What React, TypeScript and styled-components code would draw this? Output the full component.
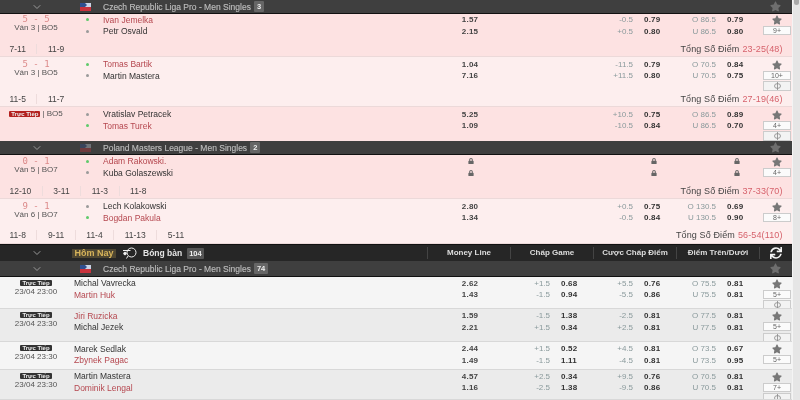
import React from 'react'
import styled, { createGlobalStyle } from 'styled-components'
import { FaStar, FaLock, FaSync } from 'react-icons/fa'
import { LuChevronDown } from 'react-icons/lu'

const GlobalStyle = createGlobalStyle`
  html, body { margin: 0; padding: 0; background: #e6e6e6; }
  body { width: 800px; height: 400px; overflow: hidden; font-family: "Liberation Sans", Arial, sans-serif; }
`

type Line = { hcp: string; val: string }
type Match = {
  tone: 'live' | 'liveAlt' | 'plain' | 'plainAlt'
  height: number
  top: number
  sets?: string[]
  subHeight?: number
  total?: [string, string]
  score?: string
  info?: string
  liveTag?: boolean
  dots?: [boolean, boolean]
  names: [string, string]
  fav: 0 | 1
  ml?: [string, string]
  game?: [Line, Line]
  point?: [Line, Line]
  ou?: [Line, Line]
  locked?: boolean
  more: string
  cash?: boolean
}

const l = (hcp: string, val: string): Line => ({ hcp, val })

const czech: Match[] = [
  { tone: 'live', height: 27, top: 0, subHeight: 16, sets: ['7-11', '11-9'], total: ['Tổng Số Điểm', '23-25(48)'], score: '5 - 5', info: 'Ván 3 | BO5', dots: [true, false], names: ['Ivan Jemelka', 'Petr Osvald'], fav: 0, ml: ['1.57', '2.15'], point: [l('-0.5', '0.79'), l('+0.5', '0.80')], ou: [l('O 86.5', '0.79'), l('U 86.5', '0.80')], more: '9+' },
  { tone: 'liveAlt', height: 34, top: 1.5, subHeight: 16, sets: ['11-5', '11-7'], total: ['Tổng Số Điểm', '27-19(46)'], score: '5 - 1', info: 'Ván 3 | BO5', dots: [true, false], names: ['Tomas Bartik', 'Martin Mastera'], fav: 0, ml: ['1.04', '7.16'], point: [l('-11.5', '0.79'), l('+11.5', '0.80')], ou: [l('O 70.5', '0.84'), l('U 70.5', '0.75')], more: '10+', cash: true },
  { tone: 'live', height: 34, top: 1.5, liveTag: true, info: '| BO5', dots: [false, true], names: ['Vratislav Petracek', 'Tomas Turek'], fav: 1, ml: ['5.25', '1.09'], point: [l('+10.5', '0.75'), l('-10.5', '0.84')], ou: [l('O 86.5', '0.89'), l('U 86.5', '0.70')], more: '4+', cash: true },
]

const poland: Match[] = [
  { tone: 'live', height: 28, top: 0.5, subHeight: 16, sets: ['12-10', '3-11', '11-3', '11-8'], total: ['Tổng Số Điểm', '37-33(70)'], score: '0 - 1', info: 'Ván 5 | BO7', dots: [true, false], names: ['Adam Rakowski.', 'Kuba Golaszewski'], fav: 0, locked: true, more: '4+' },
  { tone: 'liveAlt', height: 28, top: 1.5, subHeight: 17, sets: ['11-8', '9-11', '11-4', '11-13', '5-11'], total: ['Tổng Số Điểm', '56-54(110)'], score: '9 - 1', info: 'Ván 6 | BO7', dots: [false, true], names: ['Lech Kolakowski', 'Bogdan Pakula'], fav: 1, ml: ['2.80', '1.34'], point: [l('+0.5', '0.75'), l('-0.5', '0.84')], ou: [l('O 130.5', '0.69'), l('U 130.5', '0.90')], more: '8+' },
]

const today: Match[] = [
  { tone: 'plain', height: 32, top: 0.5, info: '23/04 23:00', names: ['Michal Vavrecka', 'Martin Huk'], fav: 1, ml: ['2.62', '1.43'], game: [l('+1.5', '0.68'), l('-1.5', '0.94')], point: [l('+5.5', '0.76'), l('-5.5', '0.86')], ou: [l('O 75.5', '0.81'), l('U 75.5', '0.81')], more: '5+', cash: true },
  { tone: 'plainAlt', height: 33, top: 1, info: '23/04 23:30', names: ['Jiri Ruzicka', 'Michal Jezek'], fav: 0, ml: ['1.59', '2.21'], game: [l('-1.5', '1.38'), l('+1.5', '0.34')], point: [l('-2.5', '0.81'), l('+2.5', '0.81')], ou: [l('O 77.5', '0.81'), l('U 77.5', '0.81')], more: '5+', cash: true },
  { tone: 'plain', height: 28, top: 1, info: '23/04 23:30', names: ['Marek Sedlak', 'Zbynek Pagac'], fav: 1, ml: ['2.44', '1.49'], game: [l('+1.5', '0.52'), l('-1.5', '1.11')], point: [l('+4.5', '0.81'), l('-4.5', '0.81')], ou: [l('O 73.5', '0.67'), l('U 73.5', '0.95')], more: '5+' },
  { tone: 'plainAlt', height: 30, top: 0.5, info: '23/04 23:30', names: ['Martin Mastera', 'Dominik Lengal'], fav: 1, ml: ['4.57', '1.16'], game: [l('+2.5', '0.34'), l('-2.5', '1.38')], point: [l('+9.5', '0.76'), l('-9.5', '0.86')], ou: [l('O 70.5', '0.81'), l('U 70.5', '0.81')], more: '7+', cash: true },
]

const toneBg = { live: '#fde2e2', liveAlt: '#fdeeee', plain: '#f5f5f5', plainAlt: '#ebebeb' }

const Shell = styled.div`
  width: 800px;
  height: 400px;
  display: flex;
  overflow: hidden;
  filter: blur(0.45px);
`
const Page = styled.div`
  width: 792px;
  height: 400px;
  overflow: hidden;
  color: #333;
  font-size: 8.5px;
`
const ScrollTrack = styled.div`
  width: 8px;
  background: #e6e6e6;
  border-left: 1px solid #f4f4f4;
  box-sizing: border-box;
`
const ScrollThumb = styled.div`
  height: 5px;
  margin: 0 1px;
  background: #a9a9a9;
  border-radius: 0 0 3px 3px;
`
const LeagueBar = styled.div<{ $h: number }>`
  height: ${p => p.$h}px;
  box-sizing: border-box;
  display: grid;
  grid-template-columns: 74px 23px 1fr 34px;
  align-items: center;
  background: #3f3f3f;
  border-bottom: 1px solid #111;
  color: #bdbdbd;
  font-size: 8.5px;
`
const Chevron = styled.div`
  display: flex;
  justify-content: center;
  color: #999;
  font-size: 12px;
`
const FlagBox = styled.div<{ $dim?: boolean }>`
  display: flex;
  justify-content: center;
  opacity: ${p => (p.$dim ? 0.35 : 1)};
`
const LeagueName = styled.div`
  display: flex;
  align-items: center;
  gap: 3px;
  padding-left: 6px;
  -webkit-text-stroke: 0.15px #bdbdbd;
`
const CountBadge = styled.span`
  background: #666;
  color: #eee;
  font-weight: bold;
  font-size: 7.5px;
  padding: 1px 3px;
  border-radius: 1px;
  -webkit-text-stroke: 0;
`
const TodayCount = styled(CountBadge)`
  padding: 1px 2px;
  background: #555;
`
const BarStar = styled.div`
  display: flex;
  justify-content: center;
  color: #6e6e6e;
  font-size: 11px;
`
const Row = styled.div<{ $h: number; $bg: string; $top: number }>`
  height: ${p => p.$h}px;
  box-sizing: border-box;
  padding-top: ${p => p.$top}px;
  display: grid;
  grid-template-columns: 74px 29px 324px 83px 83px 83px 83px 33px;
  background: ${p => p.$bg};
  overflow: hidden;
`
const TodayRow = styled(Row)`
  grid-template-columns: 74px 353px 83px 83px 83px 83px 33px;
  border-bottom: 1px solid #d8d8d8;
`
const Status = styled.div`
  display: flex;
  flex-direction: column;
  align-items: center;
  padding-right: 2px;
  color: #555;
  font-size: 8px;
  line-height: 7px;
`
const TodayStatus = styled(Status)`
  padding-top: 2px;
  line-height: 8px;
  gap: 2px;
`
const Score = styled.div`
  color: #dc8a8a;
  font-size: 9px;
  font-family: "DejaVu Sans Mono", monospace;
  line-height: 9px;
  padding-top: 1px;
  white-space: pre;
`
const LiveLine = styled.div`
  display: flex;
  align-items: center;
  gap: 2px;
  line-height: 9px;
  margin-top: 0.5px;
`
const LiveTag = styled.span<{ $dark?: boolean }>`
  background: ${p => (p.$dark ? '#333' : '#b3211f')};
  color: #eee;
  font-size: 6px;
  font-weight: bold;
  line-height: 6px;
  padding: 0 2px;
  border-radius: 1px;
`
const Lines = styled.div`
  display: flex;
  flex-direction: column;
`
const LineCell = styled.div`
  height: 11.5px;
  display: flex;
  align-items: center;
`
const Dot = styled.span<{ $on: boolean }>`
  width: 3px;
  height: 3px;
  margin-left: 11.5px;
  border-radius: 50%;
  background: ${p => (p.$on ? '#5fca6b' : '#9a9a9a')};
`
const Name = styled.span<{ $fav: boolean }>`
  font-size: 8.5px;
  color: ${p => (p.$fav ? '#b5474f' : '#333')};
`
const Odd = styled.span`
  width: 83px;
  box-sizing: border-box;
  padding-left: 3px;
  text-align: center;
  font-weight: bold;
  font-size: 8px;
  color: #444;
  letter-spacing: 0.2px;
`
const Hcp = styled.span`
  width: 40px;
  text-align: right;
  font-size: 8px;
  color: #8a9a9c;
`
const Price = styled.span`
  margin-left: 11px;
  font-weight: bold;
  font-size: 8px;
  color: #333;
  letter-spacing: 0.2px;
`
const LockBox = styled.span<{ $offset: number }>`
  width: 100%;
  padding-left: ${p => p.$offset}px;
  color: #666;
  font-size: 6px;
  display: flex;
`
const Extras = styled.div`
  display: flex;
  flex-direction: column;
  align-items: center;
  padding: 1px 0 0 3px;
  color: #777;
  font-size: 10px;
  line-height: 0;
`
const MoreBtn = styled.div`
  width: 26px;
  height: 7px;
  margin-top: 1px;
  background: #fbfbfb;
  border: 1px solid #ccc;
  color: #666;
  font-size: 7px;
  line-height: 7px;
  text-align: center;
`
const CashBtn = styled(MoreBtn)`
  height: 8px;
  line-height: 8px;
  margin-top: 1.5px;
  background: #f3f3f3;
`
const SubRow = styled.div<{ $h: number; $bg: string }>`
  height: ${p => p.$h}px;
  box-sizing: border-box;
  display: flex;
  align-items: center;
  justify-content: space-between;
  padding: 0 9.5px 0 9.5px;
  background: ${p => p.$bg};
  border-bottom: 1px solid #ecd9d9;
`
const Sets = styled.div`
  display: flex;
  font-size: 8.5px;
  color: #444;
`
const SetCell = styled.span`
  padding-right: 10.5px;
  margin-right: 10.5px;
  border-right: 1px solid #eedcdc;
  &:last-child { border-right: 0; }
`
const Total = styled.div`
  font-size: 9px;
  color: #444;
  letter-spacing: 0.12px;
`
const TotalValue = styled.span`
  margin-left: 3px;
  color: #d6626c;
`
const TodayBar = styled.div`
  height: 17px;
  box-sizing: border-box;
  display: grid;
  grid-template-columns: 74px 353px 83px 83px 83px 83px 33px;
  align-items: center;
  background: #262626;
  border-top: 1px solid #111;
  color: #ddd;
  font-weight: bold;
  font-size: 8px;
`
const TodayTitle = styled.div`
  display: flex;
  align-items: center;
`
const TodayTag = styled.span`
  width: 44px;
  height: 9px;
  margin-left: -2px;
  line-height: 9px;
  text-align: center;
  background: #4e4632;
  color: #d8b45a;
  font-size: 9px;
`
const PaddleBox = styled.span`
  margin: 0 6px;
  display: flex;
`
const Sport = styled.span`
  margin-right: 5px;
  font-size: 8.5px;
  color: #e5e5e5;
`
const HeadCell = styled.div`
  height: 12px;
  line-height: 12px;
  text-align: center;
  border-left: 1px solid #444;
  white-space: nowrap;
`
const RefreshCell = styled(HeadCell)`
  display: flex;
  justify-content: center;
  align-items: center;
  font-size: 12px;
  color: #f2f2f2;
`

const Flag = () => (
  <svg width="11" height="8" viewBox="0 0 11 8">
    <rect width="11" height="4" fill="#c9d3e6" />
    <path d="M0 0h5l2 2-2 2H0z" fill="#2f4f8f" />
    <rect y="4" width="11" height="4" fill="#c8323c" />
  </svg>
)

const Paddle = () => (
  <svg width="15" height="12" viewBox="0 0 15 12" fill="none" stroke="#eee" strokeWidth="1">
    <circle cx="9.5" cy="5.5" r="4.5" />
    <path d="M1 3.5h7.5M6 9 4.5 11.5" />
    <circle cx="3" cy="6.5" r="1.3" fill="#eee" />
  </svg>
)

const CashIcon = () => (
  <svg width="7" height="8" viewBox="0 0 7 8" fill="none" stroke="#888" strokeWidth="0.8">
    <ellipse cx="3.5" cy="4" rx="3" ry="2.4" />
    <path d="M3.5 0v8" />
  </svg>
)

const League = ({ name, count, h, dim }: { name: string; count: number; h: number; dim?: boolean }) => (
  <LeagueBar $h={h}>
    <Chevron><LuChevronDown /></Chevron>
    <FlagBox $dim={dim}><Flag /></FlagBox>
    <LeagueName>{name}<CountBadge>{count}</CountBadge></LeagueName>
    <BarStar><FaStar /></BarStar>
  </LeagueBar>
)

const Quote = ({ lines }: { lines?: [Line, Line] }) => (
  <Lines>
    {lines?.map(x => (
      <LineCell key={x.hcp}>
        <Hcp>{x.hcp}</Hcp>
        <Price>{x.val}</Price>
      </LineCell>
    ))}
  </Lines>
)

const Locks = ({ offset }: { offset: number }) => (
  <Lines>
    <LineCell><LockBox $offset={offset}><FaLock /></LockBox></LineCell>
    <LineCell><LockBox $offset={offset}><FaLock /></LockBox></LineCell>
  </Lines>
)

const More = ({ m }: { m: Match }) => (
  <Extras>
    <FaStar />
    <MoreBtn>{m.more}</MoreBtn>
    {m.cash && <CashBtn><CashIcon /></CashBtn>}
  </Extras>
)

const LiveMatch = ({ m }: { m: Match }) => (
  <>
    <Row $h={m.height} $bg={toneBg[m.tone]} $top={m.top}>
      <Status>
        {m.liveTag ? (
          <LiveLine><LiveTag>Trực Tiếp</LiveTag>{m.info}</LiveLine>
        ) : (
          <>
            <Score>{m.score}</Score>
            {m.info}
          </>
        )}
      </Status>
      <Lines>
        <LineCell><Dot $on={!!m.dots?.[0]} /></LineCell>
        <LineCell><Dot $on={!!m.dots?.[1]} /></LineCell>
      </Lines>
      <Lines>
        {m.names.map((n, i) => (
          <LineCell key={n}><Name $fav={m.fav === i}>{n}</Name></LineCell>
        ))}
      </Lines>
      {m.locked ? <Locks offset={41} /> : (
        <Lines>
          {m.ml?.map(o => <LineCell key={o}><Odd>{o}</Odd></LineCell>)}
        </Lines>
      )}
      <div />
      {m.locked ? <Locks offset={58} /> : <Quote lines={m.point} />}
      {m.locked ? <Locks offset={58} /> : <Quote lines={m.ou} />}
      <More m={m} />
    </Row>
    {m.subHeight && (
      <SubRow $h={m.subHeight} $bg={toneBg[m.tone]}>
        <Sets>{m.sets?.map(s => <SetCell key={s}>{s}</SetCell>)}</Sets>
        <Total>{m.total?.[0]}<TotalValue>{m.total?.[1]}</TotalValue></Total>
      </SubRow>
    )}
  </>
)

const TodayMatch = ({ m }: { m: Match }) => (
  <TodayRow $h={m.height} $bg={toneBg[m.tone]} $top={m.top}>
    <TodayStatus>
      <LiveTag $dark>Trực Tiếp</LiveTag>
      {m.info}
    </TodayStatus>
    <Lines>
      {m.names.map((n, i) => (
        <LineCell key={n}><Name $fav={m.fav === i}>{n}</Name></LineCell>
      ))}
    </Lines>
    <Lines>
      {m.ml?.map(o => <LineCell key={o}><Odd>{o}</Odd></LineCell>)}
    </Lines>
    <Quote lines={m.game} />
    <Quote lines={m.point} />
    <Quote lines={m.ou} />
    <More m={m} />
  </TodayRow>
)

export default function App() {
  return (
    <Shell>
      <GlobalStyle />
      <Page>
        <League name="Czech Republic Liga Pro - Men Singles" count={3} h={14} />
        {czech.map(m => <LiveMatch key={m.names[0]} m={m} />)}
        <League name="Poland Masters League - Men Singles" count={2} h={14} dim />
        {poland.map(m => <LiveMatch key={m.names[0]} m={m} />)}
        <TodayBar>
          <Chevron><LuChevronDown /></Chevron>
          <TodayTitle>
            <TodayTag>Hôm Nay</TodayTag>
            <PaddleBox><Paddle /></PaddleBox>
            <Sport>Bóng bàn</Sport>
            <TodayCount>104</TodayCount>
          </TodayTitle>
          <HeadCell>Money Line</HeadCell>
          <HeadCell>Chấp Game</HeadCell>
          <HeadCell>Cược Chấp Điểm</HeadCell>
          <HeadCell>Điểm Trên/Dưới</HeadCell>
          <RefreshCell><FaSync /></RefreshCell>
        </TodayBar>
        <League name="Czech Republic Liga Pro - Men Singles" count={74} h={16} />
        {today.map(m => <TodayMatch key={m.names[0]} m={m} />)}
      </Page>
      <ScrollTrack><ScrollThumb /></ScrollTrack>
    </Shell>
  )
}
